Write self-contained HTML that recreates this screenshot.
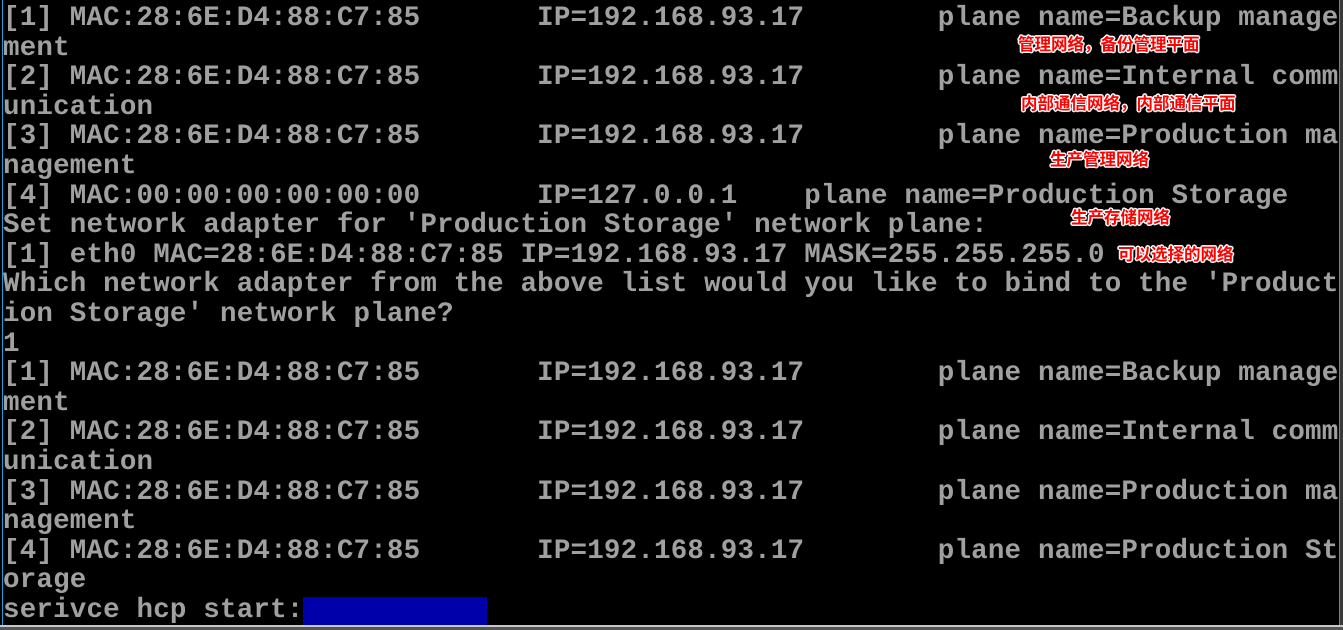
<!DOCTYPE html>
<html><head><meta charset="utf-8">
<style>
html,body{margin:0;padding:0;}
body{width:1343px;height:630px;background:#000;position:relative;overflow:hidden;}
.l{position:absolute;left:3px;white-space:pre;font-family:"Liberation Mono",monospace;font-weight:bold;font-size:27.5px;letter-spacing:0.19px;color:#a0a0a0;line-height:29.6px;height:29.6px;}
.a{position:absolute;white-space:pre;font-family:"Liberation Sans","Noto Sans CJK SC",sans-serif;font-weight:bold;font-size:16.5px;line-height:18px;color:#f00;
text-shadow:-1.5px 0 #fff,1.5px 0 #fff,0 -1.5px #fff,0 1.5px #fff,-1px -1px #fff,1px 1px #fff,-1px 1px #fff,1px -1px #fff;}
</style></head><body>
<div style="position:absolute;left:2px;top:0;width:1px;height:625px;background:#1ba0d8"></div>
<div style="position:absolute;left:1339px;top:0;width:1px;height:625px;background:#1ba0d8"></div>
<div style="position:absolute;left:1340px;top:0;width:3px;height:630px;background:#3a3a3a"></div>
<div style="position:absolute;left:0;top:625px;width:1343px;height:2px;background:#c8c8c8"></div>
<div style="position:absolute;left:0;top:627px;width:1343px;height:3px;background:#555"></div>
<div style="position:absolute;left:303px;top:597px;width:184px;height:28px;background:#0000aa"></div>

<div class="l" style="top:4px">[1] MAC:28:6E:D4:88:C7:85       IP=192.168.93.17        plane name=Backup manage</div>
<div class="l" style="top:33.6px">ment</div>
<div class="l" style="top:63.2px">[2] MAC:28:6E:D4:88:C7:85       IP=192.168.93.17        plane name=Internal comm</div>
<div class="l" style="top:92.8px">unication</div>
<div class="l" style="top:122.4px">[3] MAC:28:6E:D4:88:C7:85       IP=192.168.93.17        plane name=Production ma</div>
<div class="l" style="top:152px">nagement</div>
<div class="l" style="top:181.6px">[4] MAC:00:00:00:00:00:00       IP=127.0.0.1    plane name=Production Storage</div>
<div class="l" style="top:211.2px">Set network adapter for 'Production Storage' network plane:</div>
<div class="l" style="top:240.8px">[1] eth0 MAC=28:6E:D4:88:C7:85 IP=192.168.93.17 MASK=255.255.255.0</div>
<div class="l" style="top:270.4px">Which network adapter from the above list would you like to bind to the 'Product</div>
<div class="l" style="top:300px">ion Storage' network plane?</div>
<div class="l" style="top:329.6px">1</div>
<div class="l" style="top:359.2px">[1] MAC:28:6E:D4:88:C7:85       IP=192.168.93.17        plane name=Backup manage</div>
<div class="l" style="top:388.8px">ment</div>
<div class="l" style="top:418.4px">[2] MAC:28:6E:D4:88:C7:85       IP=192.168.93.17        plane name=Internal comm</div>
<div class="l" style="top:448px">unication</div>
<div class="l" style="top:477.6px">[3] MAC:28:6E:D4:88:C7:85       IP=192.168.93.17        plane name=Production ma</div>
<div class="l" style="top:507.2px">nagement</div>
<div class="l" style="top:536.8px">[4] MAC:28:6E:D4:88:C7:85       IP=192.168.93.17        plane name=Production St</div>
<div class="l" style="top:566.4px">orage</div>
<div class="l" style="top:596px">serivce hcp start:</div>

<div class="a" style="left:1018px;top:36px">管理网络，备份管理平面</div>
<div class="a" style="left:1021px;top:95px">内部通信网络，内部通信平面</div>
<div class="a" style="left:1050px;top:151px">生产管理网络</div>
<div class="a" style="left:1071px;top:209px">生产存储网络</div>
<div class="a" style="left:1118px;top:246px">可以选择的网络</div>
</body></html>
